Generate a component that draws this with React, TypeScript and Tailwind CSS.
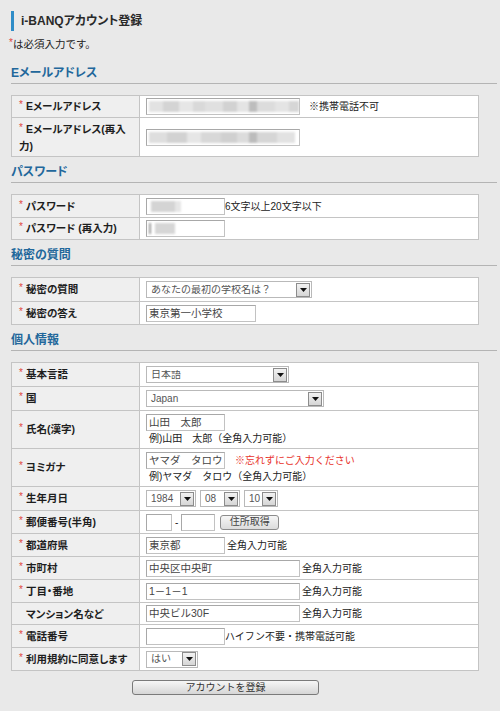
import React from "react";

const FONT = "font-['Liberation_Sans','Noto_Sans_CJK_JP',sans-serif]";

function Arrow() {
  return (
    <div className="w-[14px] h-[14px] mr-[1px] shrink-0 border border-[#8c8c8c] bg-gradient-to-b from-[#f2f2f2] to-[#d6d6d6] flex items-center justify-center">
      <svg width="7" height="4" viewBox="0 0 7 4">
        <path d="M0 0 L7 0 L3.5 4 Z" fill="#111" />
      </svg>
    </div>
  );
}

function Select({ w, value }: { w: string; value: string }) {
  return (
    <div className={`${w} h-[17px] shrink-0 border border-[#b9b9b9] bg-white flex items-center`}>
      <span className="flex-1 pl-[4px] text-[10px] text-[#555] leading-none whitespace-nowrap overflow-hidden">{value}</span>
      <Arrow />
    </div>
  );
}

function Input({ w, value, children }: { w: string; value?: string; children?: React.ReactNode }) {
  return (
    <div className={`${w} h-[17px] shrink-0 border border-[#c2c2c2] border-t-[#a8a8a8] border-l-[#a8a8a8] bg-white flex items-center pl-[2px] text-[10.5px] text-[#444] leading-none overflow-hidden`}>
      {value}
      {children}
    </div>
  );
}

function Star() {
  return <span className="text-[#e0463c] text-[10px] font-normal mr-[3px] relative -top-[2px]">*</span>;
}

function Row({
  label,
  req = true,
  h,
  first = false,
  children,
}: {
  label: React.ReactNode;
  req?: boolean;
  h: string;
  first?: boolean;
  children?: React.ReactNode;
}) {
  return (
    <div className={`flex ${h} ${first ? "" : "border-t border-[#c4c4c4]"}`}>
      <div
        className={`w-[128px] shrink-0 bg-[#efefef] border-r border-[#c4c4c4] flex items-center ${req ? "pl-[7px]" : "pl-[14px]"} text-[10.5px] leading-[16px] font-bold text-[#1e1e1e] [font-feature-settings:'palt']`}
      >
        <div>
          {req && <Star />}
          {label}
        </div>
      </div>
      <div className="flex-1 bg-white flex items-center pl-[6px] text-[10px] text-[#222]">{children}</div>
    </div>
  );
}

function Table({ children }: { children: React.ReactNode }) {
  return <div className="w-[468px] mt-[11px] border border-[#c4c4c4] bg-white">{children}</div>;
}

function Heading({ children, first = false }: { children: React.ReactNode; first?: boolean }) {
  return (
    <div
      className={`${first ? "mt-[12px]" : "mt-[6px]"} border-b border-[#b4b4b4] pb-[1px] text-[12px] leading-[18px] font-bold text-[#22679b] [font-feature-settings:'palt']`}
    >
      {children}
    </div>
  );
}

function Blur({ blocks }: { blocks: [string, string][] }) {
  return (
    <div className="flex items-center h-full blur-[1.2px]">
      {blocks.map(([w, c], i) => (
        <div key={i} className={`${w} h-[11px]`} style={{ backgroundColor: c }} />
      ))}
    </div>
  );
}

export default function App() {
  return (
    <div className={`${FONT} min-h-[711px] bg-[#e9e9e9] pl-[11px] pr-[3px] pb-[20px] text-[#222]`}>
      <div className="pt-[11px]">
        <div className="h-[20px] border-l-[3px] border-[#2f8dc8] pl-[7px] flex items-center text-[12px] font-bold text-[#2a2a2a] [font-feature-settings:'palt']">
          i-BANQアカウント登録
        </div>
      </div>
      <div className="mt-[6px] text-[10.5px] leading-[14px] -ml-[2px]">
        <span className="text-[#e0463c] text-[10px] relative -top-[2px]">*</span>は必須入力です。
      </div>

      <Heading first>Eメールアドレス</Heading>
      <Table>
        <Row label="Eメールアドレス" h="h-[21px]" first>
          <Input w="w-[154px]">
            <Blur
              blocks={[
                ["w-[14px]", "#e2e2e2"],
                ["w-[16px]", "#d4d4d4"],
                ["w-[14px]", "#e6e6e6"],
                ["w-[12px]", "#d9d9d9"],
                ["w-[18px]", "#e0e0e0"],
                ["w-[14px]", "#d2d2d2"],
                ["w-[12px]", "#e4e4e4"],
                ["w-[8px]", "#bdbdbd"],
                ["w-[18px]", "#dcdcdc"],
                ["w-[14px]", "#e4e4e4"],
                ["w-[10px]", "#d6d6d6"],
              ]}
            />
          </Input>
          <span className="ml-[9px]">※携帯電話不可</span>
        </Row>
        <Row
          label={
            <>
              Eメールアドレス(再入
              <br />
              力)
            </>
          }
          h="h-[39px]"
        >
          <Input w="w-[154px]">
            <Blur
              blocks={[
                ["w-[18px]", "#dedede"],
                ["w-[20px]", "#d2d2d2"],
                ["w-[14px]", "#e6e6e6"],
                ["w-[20px]", "#d8d8d8"],
                ["w-[16px]", "#d0d0d0"],
                ["w-[12px]", "#dcdcdc"],
                ["w-[8px]", "#bcbcbc"],
                ["w-[20px]", "#d6d6d6"],
                ["w-[18px]", "#e2e2e2"],
              ]}
            />
          </Input>
        </Row>
      </Table>

      <Heading>パスワード</Heading>
      <Table>
        <Row label="パスワード" h="h-[22px]" first>
          <Input w="w-[79px]">
            <Blur
              blocks={[
                ["w-[2px]", "#ffffff"],
                ["w-[24px]", "#d4d4d4"],
                ["w-[6px]", "#e6e6e6"],
              ]}
            />
          </Input>
          <span>6文字以上20文字以下</span>
        </Row>
        <Row label="パスワード (再入力)" h="h-[22px]">
          <Input w="w-[79px]">
            <Blur
              blocks={[
                ["w-[2px]", "#9a9a9a"],
                ["w-[4px]", "#ffffff"],
                ["w-[20px]", "#d6d6d6"],
              ]}
            />
          </Input>
        </Row>
      </Table>

      <Heading>秘密の質問</Heading>
      <Table>
        <Row label="秘密の質問" h="h-[23px]" first>
          <Select w="w-[166px]" value="あなたの最初の学校名は？" />
        </Row>
        <Row label="秘密の答え" h="h-[23px]">
          <Input w="w-[110px]" value="東京第一小学校" />
        </Row>
      </Table>

      <Heading>個人情報</Heading>
      <Table>
        <Row label="基本言語" h="h-[23px]" first>
          <Select w="w-[143px]" value="日本語" />
        </Row>
        <Row label="国" h="h-[24px]">
          <Select w="w-[178px]" value="Japan" />
        </Row>
        <Row label="氏名(漢字)" h="h-[38px]">
          <div className="flex flex-col">
            <Input w="w-[79px]" value="山田　太郎" />
            <div className="pl-[3px] leading-[13px] mt-[1px]">例)山田　太郎（全角入力可能）</div>
          </div>
        </Row>
        <Row label="ヨミガナ" h="h-[38px]">
          <div className="flex flex-col">
            <div className="flex items-center">
              <Input w="w-[79px]" value="ヤマダ　タロウ" />
              <span className="ml-[10px] text-[#e8332b]">※忘れずにご入力ください</span>
            </div>
            <div className="pl-[3px] leading-[13px] mt-[1px]">例)ヤマダ　タロウ（全角入力可能）</div>
          </div>
        </Row>
        <Row label="生年月日" h="h-[24px]">
          <div className="flex items-center gap-[4px]">
            <Select w="w-[50px]" value="1984" />
            <Select w="w-[40px]" value="08" />
            <Select w="w-[34px]" value="10" />
          </div>
        </Row>
        <Row label="郵便番号(半角)" h="h-[23px]">
          <Input w="w-[26px]" />
          <span className="mx-[3px]">-</span>
          <Input w="w-[34px]" />
          <div className="ml-[5px] w-[59px] h-[15px] rounded-[3px] border border-[#8c8c8c] bg-gradient-to-b from-[#f6f6f6] to-[#dcdcdc] flex items-center justify-center text-[10px] text-[#444] leading-none">
            住所取得
          </div>
        </Row>
        <Row label="都道府県" h="h-[23px]">
          <Input w="w-[79px]" value="東京都" />
          <span className="ml-[2px]">全角入力可能</span>
        </Row>
        <Row label="市町村" h="h-[23px]">
          <Input w="w-[154px]" value="中央区中央町" />
          <span className="ml-[2px]">全角入力可能</span>
        </Row>
        <Row label="丁目・番地" h="h-[23px]">
          <Input w="w-[154px]" value="1－1－1" />
          <span className="ml-[2px]">全角入力可能</span>
        </Row>
        <Row label="マンション名など" req={false} h="h-[22px]">
          <Input w="w-[154px]" value="中央ビル30F" />
          <span className="ml-[2px]">全角入力可能</span>
        </Row>
        <Row label="電話番号" h="h-[23px]">
          <Input w="w-[79px]" />
          <span>ハイフン不要・携帯電話可能</span>
        </Row>
        <Row label="利用規約に同意します" h="h-[23px]">
          <Select w="w-[52px]" value="はい" />
        </Row>
      </Table>

      <div className="mt-[9px] ml-[121px] w-[187px] h-[15px] rounded-[3px] border border-[#7a7a7a] bg-gradient-to-b from-[#f6f6f6] to-[#d6d6d6] flex items-center justify-center text-[10px] text-[#333] leading-none">
        アカウントを登録
      </div>
    </div>
  );
}
